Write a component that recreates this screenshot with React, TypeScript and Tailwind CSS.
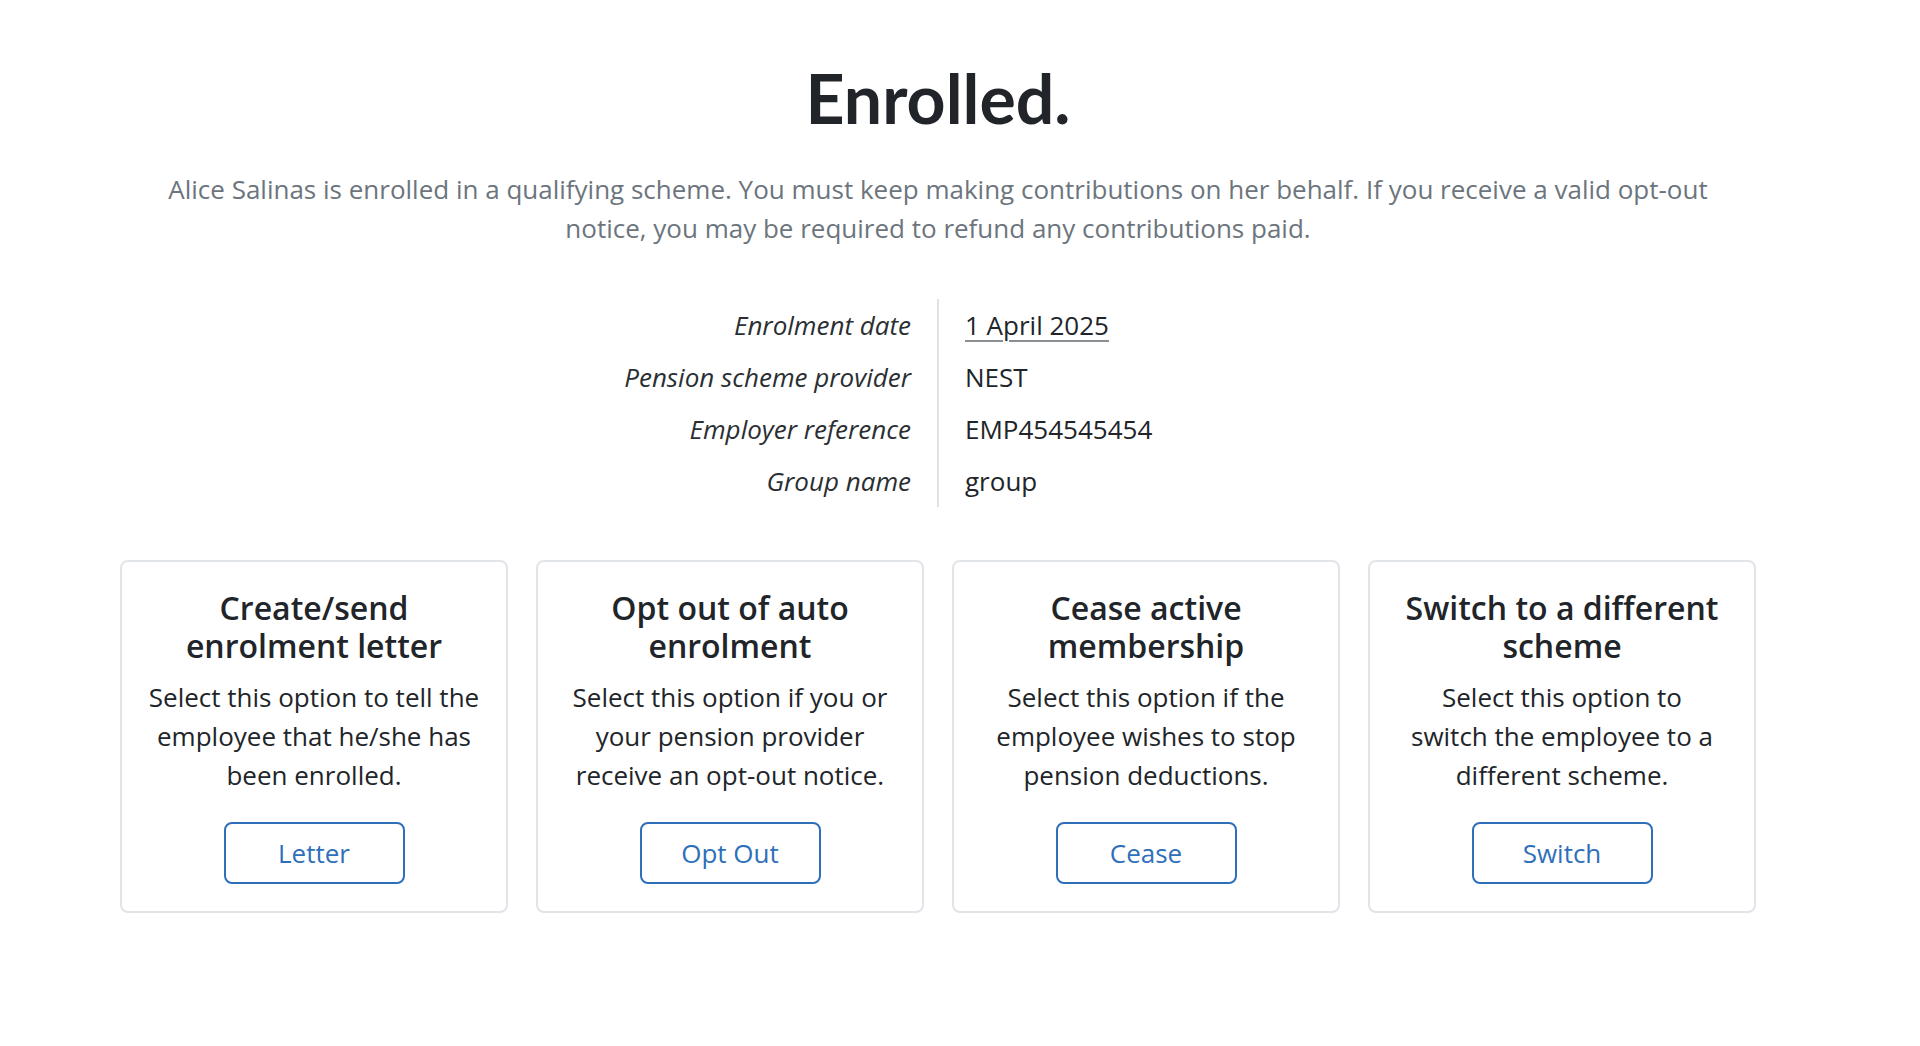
import { ReactNode } from 'react'

interface DetailRow {
  label: string
  value: ReactNode
}

interface ActionCard {
  title: string
  text: string
  button: string
  textWidth?: string
}

const details: DetailRow[] = [
  {
    label: 'Enrolment date',
    value: <span className="underline decoration-[#8a8f94] decoration-[1.5px] underline-offset-[5px]">1 April 2025</span>,
  },
  { label: 'Pension scheme provider', value: 'NEST' },
  { label: 'Employer reference', value: 'EMP454545454' },
  { label: 'Group name', value: 'group' },
]

const cards: ActionCard[] = [
  {
    title: 'Create/send enrolment letter',
    text: 'Select this option to tell the employee that he/she has been enrolled.',
    button: 'Letter',
  },
  {
    title: 'Opt out of auto enrolment',
    text: 'Select this option if you or your pension provider receive an opt-out notice.',
    button: 'Opt Out',
  },
  {
    title: 'Cease active membership',
    text: 'Select this option if the employee wishes to stop pension deductions.',
    button: 'Cease',
  },
  {
    title: 'Switch to a different scheme',
    text: 'Select this option to switch the employee to a different scheme.',
    button: 'Switch',
    textWidth: 'max-w-[310px]',
  },
]

export default function App() {
  return (
    <div className="min-h-[1046px] bg-white font-['Open_Sans',sans-serif] text-[#212529]">
      <main className="w-[1876px] px-[120px] pt-[58px] pb-10">
        {/* Heading */}
        <h1 className="text-center font-['Lato',sans-serif] text-[68px] font-bold leading-[80px] text-[#212529]">
          Enrolled.
        </h1>
        <p className="mx-auto mt-[32px] max-w-[1560px] text-center text-[26px] leading-[39px] text-[#6c757d]">
          Alice Salinas is enrolled in a qualifying scheme. You must keep making contributions on her behalf. If you
          receive a valid opt-out notice, you may be required to refund any contributions paid.
        </p>

        {/* Details */}
        <div className="mt-[51px] flex">
          <div className="flex-1 pr-[26px] text-right">
            {details.map((row) => (
              <div key={row.label} className="h-[52px] text-[26px] italic leading-[52px] text-[#2b2f33]">
                {row.label}
              </div>
            ))}
          </div>
          <div className="flex-1 border-l-2 border-[#dee2e6] pl-[26px]">
            {details.map((row) => (
              <div key={row.label} className="h-[52px] text-[26px] leading-[52px] text-[#212529]">
                {row.value}
              </div>
            ))}
          </div>
        </div>

        {/* Action cards */}
        <div className="mt-[53px] grid grid-cols-4 gap-[28px]">
          {cards.map((card) => (
            <div
              key={card.button}
              className="flex flex-col items-center rounded-[8px] border-2 border-[#e1e4e8] px-6 pt-[27px] pb-[27px] text-center"
            >
              <h3 className="text-[32px] font-semibold leading-[38px] text-[#212529]">{card.title}</h3>
              <p className={`mt-[13px] text-[26px] leading-[39px] text-[#212529] ${card.textWidth ?? ''}`}>{card.text}</p>
              <button className="mt-[27px] h-[62px] w-[181px] rounded-[8px] border-2 border-[#2f6fba] text-[26px] text-[#2f6fba]">
                {card.button}
              </button>
            </div>
          ))}
        </div>
      </main>
    </div>
  )
}
